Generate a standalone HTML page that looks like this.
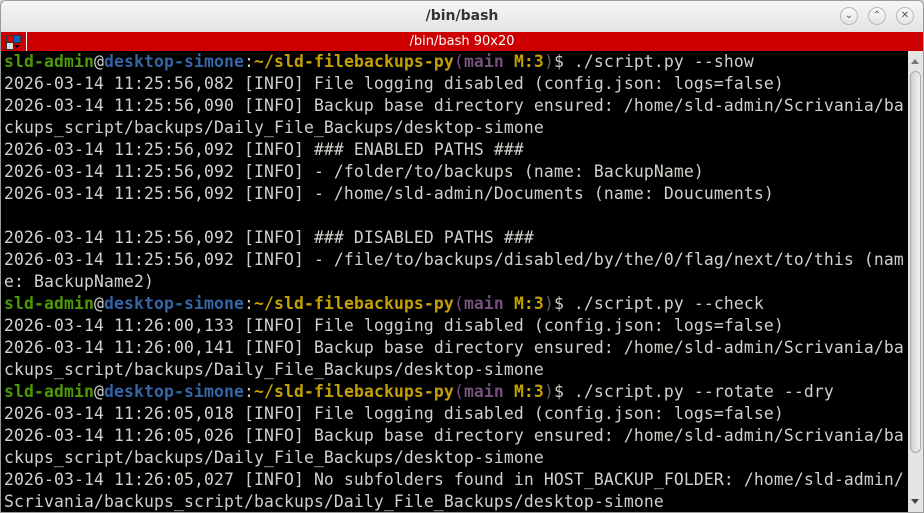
<!DOCTYPE html>
<html><head><style>
html,body{margin:0;padding:0;width:924px;height:512px;overflow:hidden;background:#d6d6d6}
.win{position:absolute;left:0;top:0;width:922px;height:511px;border:1px solid #9a9a9a;border-radius:6px 6px 0 0;background:#ececec;overflow:hidden}
.title{position:absolute;left:0;top:0;width:922px;height:31px;background:linear-gradient(#f6f6f6,#e3e3e3);font:bold 14px "DejaVu Sans","Liberation Sans",sans-serif;color:#333;text-align:center;line-height:31px}
.circ{position:absolute;top:6px;width:16px;height:16px;border:1px solid #b9b9b9;border-radius:50%;background:linear-gradient(#fafafa,#e4e4e4);font:10px "DejaVu Sans",sans-serif;color:#555;line-height:16px;text-align:center}
.tab{position:absolute;left:0;top:31px;width:922px;height:19px;background:#cc0000;color:#fff;font:13px "DejaVu Sans","Liberation Sans",sans-serif;text-align:center;line-height:19px}
.tabicon{position:absolute;left:0;top:0;width:25px;height:19px;background:#cc0000;border-right:1px solid #fff}
.term{position:absolute;left:0;top:50px;width:907px;height:461px;background:#000;overflow:hidden}
pre{margin:0;padding:0 0 0 3px;font:16.4px "DejaVu Sans Mono","Liberation Mono",monospace;letter-spacing:0.13px;line-height:22px;color:#cfd2cb;white-space:pre}
.g{color:#4e9a06;font-weight:bold}.b{color:#3465a4;font-weight:bold}.y{color:#c4a000;font-weight:bold}.p{color:#75507b}.pb{color:#75507b;font-weight:bold}
.sb{position:absolute;left:907px;top:50px;width:15px;height:461px;background:#e4e4e4}
.thumb{position:absolute;left:2px;top:20px;width:11px;height:382px;background:linear-gradient(90deg,#d0d0d0,#f2f2f2);border:1px solid #aaa;border-radius:6px;box-sizing:border-box}
</style></head><body><div class="win">
<div class="title">/bin/bash
<div class="circ" style="left:839px">&#8964;</div><div class="circ" style="left:867px">&#8963;</div><div class="circ" style="left:895px">&#x2715;</div></div>
<div class="tab">/bin/bash 90x20<div class="tabicon">
<div style="position:absolute;left:5px;top:3px;width:6px;height:6px;background:#d00;border:1px solid #333"></div>
<div style="position:absolute;left:12px;top:3px;width:6px;height:6px;background:#06c;border:1px solid #333"></div>
<div style="position:absolute;left:5px;top:10px;width:6px;height:6px;background:#ddd;border:1px solid #333"></div>
<div style="position:absolute;left:13px;top:13px;width:0;height:0;border:3px solid transparent;border-top-color:#000"></div></div></div>
<div class="term"><pre><span class="g">sld-admin</span>@<span class="b">desktop-simone</span>:<span class="y">~/sld-filebackups-py</span><span class="p">(</span><span class="pb">main</span> <span class="y">M:3</span><span class="p">)</span>$ ./script.py --show
2026-03-14 11:25:56,082 [INFO] File logging disabled (config.json: logs=false)
2026-03-14 11:25:56,090 [INFO] Backup base directory ensured: /home/sld-admin/Scrivania/ba
ckups_script/backups/Daily_File_Backups/desktop-simone
2026-03-14 11:25:56,092 [INFO] ### ENABLED PATHS ###
2026-03-14 11:25:56,092 [INFO] - /folder/to/backups (name: BackupName)
2026-03-14 11:25:56,092 [INFO] - /home/sld-admin/Documents (name: Doucuments)

2026-03-14 11:25:56,092 [INFO] ### DISABLED PATHS ###
2026-03-14 11:25:56,092 [INFO] - /file/to/backups/disabled/by/the/0/flag/next/to/this (nam
e: BackupName2)
<span class="g">sld-admin</span>@<span class="b">desktop-simone</span>:<span class="y">~/sld-filebackups-py</span><span class="p">(</span><span class="pb">main</span> <span class="y">M:3</span><span class="p">)</span>$ ./script.py --check
2026-03-14 11:26:00,133 [INFO] File logging disabled (config.json: logs=false)
2026-03-14 11:26:00,141 [INFO] Backup base directory ensured: /home/sld-admin/Scrivania/ba
ckups_script/backups/Daily_File_Backups/desktop-simone
<span class="g">sld-admin</span>@<span class="b">desktop-simone</span>:<span class="y">~/sld-filebackups-py</span><span class="p">(</span><span class="pb">main</span> <span class="y">M:3</span><span class="p">)</span>$ ./script.py --rotate --dry
2026-03-14 11:26:05,018 [INFO] File logging disabled (config.json: logs=false)
2026-03-14 11:26:05,026 [INFO] Backup base directory ensured: /home/sld-admin/Scrivania/ba
ckups_script/backups/Daily_File_Backups/desktop-simone
2026-03-14 11:26:05,027 [INFO] No subfolders found in HOST_BACKUP_FOLDER: /home/sld-admin/
Scrivania/backups_script/backups/Daily_File_Backups/desktop-simone</pre></div>
<div class="sb"><div style="position:absolute;left:3px;top:8px;border:4px solid transparent;border-bottom:5px solid #777;border-top:0"></div><div class="thumb"></div><div style="position:absolute;left:3px;bottom:8px;border:4px solid transparent;border-top:5px solid #444;border-bottom:0"></div></div>
</div></body></html>
